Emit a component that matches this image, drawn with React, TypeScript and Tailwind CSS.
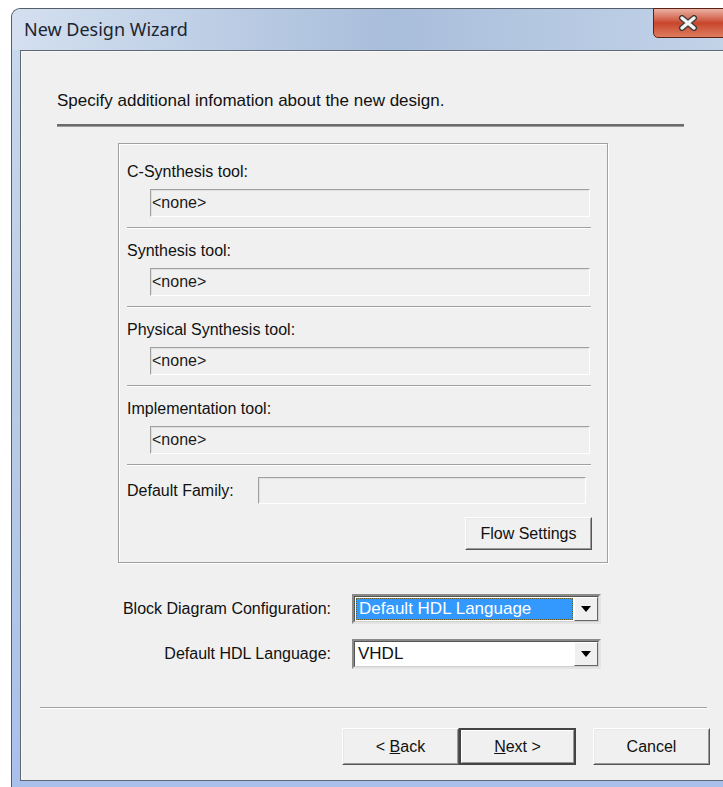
import { ReactNode } from "react";

const font = { fontFamily: '"Liberation Sans", Arial, sans-serif' };

// sunken read-only text box
const Field = ({ text, className }: { text?: string; className: string }) => (
  <div
    className={`border border-t-[#a0a0a0] border-l-[#a0a0a0] border-b-white border-r-white bg-[#f0f0f0] ${className}`}
  >
    <div className="h-full border border-t-[#e0e0e0] border-l-[#e0e0e0] border-b-[#f0f0f0] border-r-[#f0f0f0] flex items-center text-[16px] text-[#1a1a1a]">
      {text}
    </div>
  </div>
);

// etched horizontal line
const Etched = ({ className }: { className: string }) => (
  <div className={`h-[2px] border-t border-[#a0a0a0] border-b border-b-white ${className}`} />
);

const ToolRow = ({ label }: { label: string }) => (
  <div className="flex flex-col">
    <div className="h-[18px] leading-[18px] text-[16px] text-[#111]">{label}</div>
    <Field text="<none>" className="mt-[8px] ml-[23px] w-[440px] h-[28px]" />
    <Etched className="mt-[10px] w-[464px]" />
  </div>
);

const WinButton = ({
  children,
  isDefault,
  className,
}: {
  children: ReactNode;
  isDefault?: boolean;
  className: string;
}) => (
  <div
    className={`${
      isDefault ? "border-2 border-[#444]" : "border border-t-white border-l-white border-b-[#555] border-r-[#555]"
    } bg-[#f0f0f0] ${className}`}
  >
    <div
      className={`h-full flex items-center justify-center text-[16px] text-[#111] ${
        isDefault
          ? "border border-t-white border-l-white border-b-[#999] border-r-[#999]"
          : "border border-t-[#e8e8e8] border-l-[#e8e8e8] border-b-[#9a9a9a] border-r-[#9a9a9a]"
      }`}
    >
      {children}
    </div>
  </div>
);

const DropArrow = () => (
  <div className="w-[24px] h-full border border-t-white border-l-white border-b-[#666] border-r-[#666] bg-[#f0f0f0] flex items-center justify-center">
    <svg width="10" height="6" viewBox="0 0 10 6">
      <path d="M0 0h10L5 6z" fill="#000" />
    </svg>
  </div>
);

const Combo = ({ value, selected }: { value: string; selected?: boolean }) => (
  <div className="w-[249px] h-[30px] border-2 border-t-[#8a8a8a] border-l-[#8a8a8a] border-b-[#e4e4e4] border-r-[#e4e4e4] bg-white">
    <div className="h-full flex border border-t-[#555] border-l-[#555] border-b-[#d0d0d0] border-r-[#d0d0d0]">
      <div className="flex-1 p-[1px]">
        <div
          className={`h-full flex items-center pl-[2px] text-[17px] ${
            selected ? "bg-[#3399ff] text-white border border-dotted border-[#6b5a2a]" : "text-[#111]"
          }`}
        >
          {value}
        </div>
      </div>
      <DropArrow />
    </div>
  </div>
);

export default function App() {
  return (
    <div className="w-[723px] h-[787px] bg-white overflow-hidden" style={font}>
      {/* window frame */}
      <div className="relative ml-[11px] mt-[8px] w-[760px] h-[790px] rounded-tl-[9px] border-l border-t border-[#555d6a] bg-gradient-to-b from-[#c9d9ee] via-[#b9cbe4] to-[#a9c0ec]">
        {/* title bar */}
        <div className="h-[41px] flex items-center pl-[12px] rounded-tl-[9px] bg-gradient-to-r from-[#d4e0f0] via-[#a9bedb] to-[#c6d6ea]">
          <span
            className="text-[18px] text-[#1b2530]"
            style={{ fontFamily: '"Noto Sans", "Liberation Sans", sans-serif' }}
          >
            New Design Wizard
          </span>
        </div>

        {/* close button */}
        <div className="absolute left-[641px] top-[-1px] w-[90px] h-[30px] rounded-b-[5px] border border-[#5b2318] bg-gradient-to-b from-[#e9b1a3] via-[#c9452c] to-[#dd7c5e] flex items-center pl-[24px]">
          <svg width="20" height="16" viewBox="0 0 20 16">
            <path d="M4 3l12 10M16 3L4 13" stroke="#3a3a3a" strokeWidth="6" strokeLinecap="round" />
            <path d="M4 3l12 10M16 3L4 13" stroke="#f4f4f4" strokeWidth="3.5" strokeLinecap="round" />
          </svg>
        </div>

        {/* client area */}
        <div className="ml-[8px] h-[731px] border-l border-t border-b border-[#5d6774] bg-[#f0f0f0]">
          <div className="h-full border-l border-t border-[#f8f8f8] pl-[35px] pt-[40px]">
            <div className="h-[18px] leading-[18px] text-[17px] text-[#111]">
              Specify additional infomation about the new design.
            </div>
            <div className="mt-[14px] w-[627px] h-[3px] bg-[#6b6b6b] border-b border-[#9a9a9a]" />

            {/* tool group box */}
            <div className="mt-[16px] ml-[61px] w-[490px] h-[420px] border border-[#a0a0a0] shadow-[inset_1px_1px_0_#fff,1px_1px_0_#fff]">
              <div className="pl-[8px] pt-[19px] flex flex-col gap-[13px]">
                <ToolRow label="C-Synthesis tool:" />
                <ToolRow label="Synthesis tool:" />
                <ToolRow label="Physical Synthesis tool:" />
                <ToolRow label="Implementation tool:" />
              </div>
              <div className="pl-[8px] mt-[11px] flex items-center">
                <span className="text-[16px] text-[#111] w-[131px]">Default Family:</span>
                <Field className="w-[328px] h-[27px]" />
              </div>
              <div className="flex justify-end pr-[15px] mt-[13px]">
                <WinButton className="w-[127px] h-[33px]">Flow Settings</WinButton>
              </div>
            </div>

            {/* language settings */}
            <div className="mt-[31px] grid grid-cols-[274px_249px] gap-x-[21px] gap-y-[15px] items-center">
              <span className="text-right text-[16px] text-[#111]">Block Diagram Configuration:</span>
              <Combo value="Default HDL Language" selected />
              <span className="text-right text-[16px] text-[#111]">Default HDL Language:</span>
              <Combo value="VHDL" />
            </div>

            <Etched className="mt-[38px] ml-[-17px] w-[667px]" />

            {/* wizard buttons */}
            <div className="mt-[19px] ml-[285px] flex">
              <WinButton className="w-[117px] h-[37px]">
                &lt;&nbsp;<u>B</u>ack
              </WinButton>
              <WinButton isDefault className="w-[117px] h-[37px]">
                <u>N</u>ext&nbsp;&gt;
              </WinButton>
              <WinButton className="ml-[17px] w-[117px] h-[37px]">Cancel</WinButton>
            </div>
          </div>
        </div>
      </div>
    </div>
  );
}
